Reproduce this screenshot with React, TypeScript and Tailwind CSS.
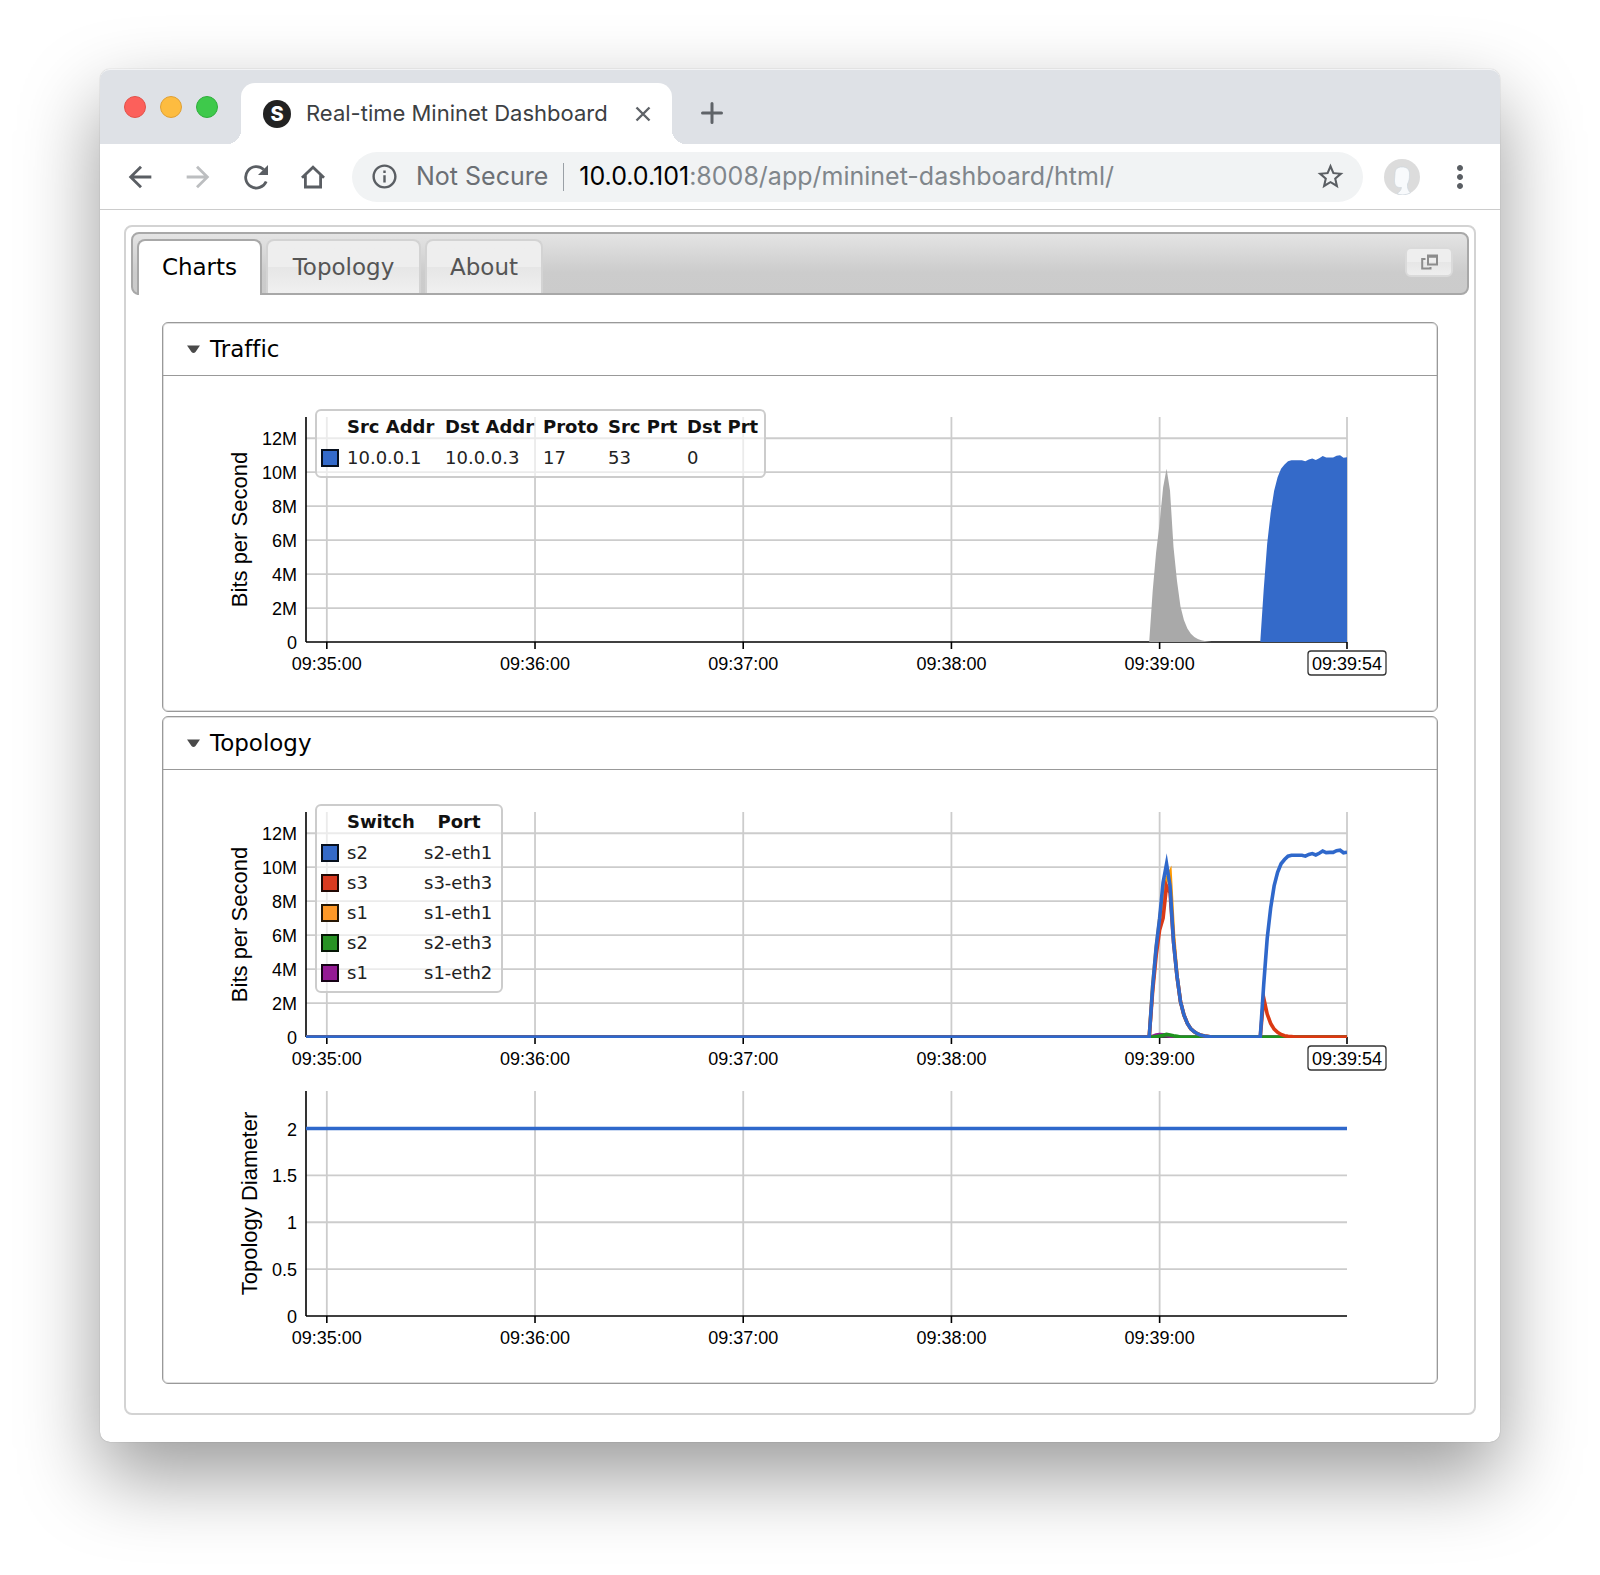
/**
 * Real-time Mininet Dashboard, shown inside a browser window
 */

import React, { useState } from 'react';
import {
  MdArrowBack,
  MdArrowForward,
  MdInfoOutline,
  MdMoreVert,
  MdRefresh,
  MdStarBorder
} from 'react-icons/md';

type Point = [number, number];

interface Series {
  color: string;
  points: Point[];
  area?: boolean;
}

interface Tick {
  value: number;
  label: string;
}

interface ChartProps {
  title: string;
  titleX: number;
  ticks: Tick[];
  max: number;
  series: Series[];
  padTop: number;
  padBottom: number;
  showNow?: boolean;
}

// Plot area inside the chart drawing
const WIDTH = 1274;
const LEFT = 143;
const RIGHT = 1184;
const HEIGHT = 225;

// Times are seconds relative to 09:39:00
const START = -246;
const END = 54;

const timeTicks: Tick[] = [
  { value: -240, label: '09:35:00' },
  { value: -180, label: '09:36:00' },
  { value: -120, label: '09:37:00' },
  { value: -60, label: '09:38:00' },
  { value: 0, label: '09:39:00' }
];

const bpsTicks: Tick[] = [0, 2, 4, 6, 8, 10, 12].map(value => ({
  value,
  label: value === 0 ? '0' : `${value}M`
}));

const diameterTicks: Tick[] = [0, 0.5, 1, 1.5, 2].map(value => ({
  value,
  label: `${value}`
}));

// One sample a second, starting at the given time
const samples = (from: number, values: number[]): Point[] =>
  values.map((value, i) => [from + i, value]);

const decay = [5.6, 3.6, 2.1, 1.3, 0.8, 0.48, 0.3, 0.18, 0.1, 0.06, 0.03, 0];

const ramp = [
  3.1, 5.8, 7.6, 8.9, 9.7, 10.2, 10.45, 10.65, 10.7, 10.7, 10.7, 10.7, 10.65, 10.75, 10.8, 10.72,
  10.82, 10.95, 10.86, 10.87, 10.87, 10.97, 11, 10.85, 10.88
];

const trafficSeries: Series[] = [
  { color: '#a9a9a9', area: true, points: samples(-3, [0, 3, 5.3, 7, 9.1, 10.2, 8.9, ...decay]) },
  { color: '#346ac9', area: true, points: [[29, 0], ...samples(30, ramp)] }
];

const portSeries: Series[] = [
  {
    color: '#941a94',
    points: [[START, 0], ...samples(-3, [0, 0.04, 0.12, 0.14, 0.13, 0.1, 0.05, 0]), [END, 0]]
  },
  {
    color: '#ff9900',
    points: [[START, 0], ...samples(-3, [0, 3, 5.2, 6.9, 8.4, 9.3, 9.7, 6, ...decay.slice(1)])]
  },
  {
    color: '#1f931f',
    points: [[START, 0], ...samples(-3, [0, 0, 0.02, 0.06, 0.1, 0.15, 0.12, 0.07, 0.04, 0]), [END, 0]]
  },
  {
    color: '#db3a17',
    points: [
      [START, 0],
      ...samples(-3, [0, 2.7, 4.8, 6.3, 7, 8.9, 8.5, ...decay])
    ]
  },
  {
    color: '#db3912',
    points: [
      [29, 0],
      ...samples(30, [2.3, 1.35, 0.8, 0.46, 0.27, 0.15, 0.08, 0.04, 0.02, 0]),
      [END, 0]
    ]
  },
  {
    color: '#2f68cb',
    points: [
      [START, 0],
      ...samples(-3, [0, 3, 5.3, 7, 9.1, 10.2, 8.9, ...decay]),
      [29, 0],
      ...samples(30, ramp)
    ]
  }
];

const diameterSeries: Series[] = [{ color: '#2f68cb', points: [[START, 2], [END, 2]] }];

const Chart: React.FC<ChartProps> = ({
  title,
  titleX,
  ticks,
  max,
  series,
  padTop,
  padBottom,
  showNow = false
}) => {
  const x = (t: number) => LEFT + ((t - START) / (END - START)) * (RIGHT - LEFT);
  const y = (v: number) => HEIGHT - (v / max) * HEIGHT;
  const toPoints = (points: Point[]) => points.map(([t, v]) => `${x(t)},${y(v)}`).join(' ');

  const clipId = `plot-${title.replace(/ /g, '-')}-${padBottom}`;

  return (
    <svg
      viewBox={`0 ${-padTop} ${WIDTH} ${padTop + HEIGHT + padBottom}`}
      className="block w-full font-['Liberation_Sans',Arial,sans-serif]"
      role="img"
      aria-label={title}
    >
      <clipPath id={clipId}>
        <rect x={LEFT} y="0" width={RIGHT - LEFT} height={HEIGHT + 1} />
      </clipPath>

      {/* Grid */}
      <g stroke="#cccccc" strokeWidth="1.8">
        {ticks.slice(1).map(tick => (
          <line key={tick.label} x1={LEFT} x2={RIGHT} y1={y(tick.value)} y2={y(tick.value)} />
        ))}
        {timeTicks.map(tick => (
          <line key={tick.label} x1={x(tick.value)} x2={x(tick.value)} y1="0" y2={HEIGHT} />
        ))}
        {showNow && <line x1={RIGHT} x2={RIGHT} y1="0" y2={HEIGHT} />}
      </g>

      {/* Axes */}
      <g stroke="#000000" strokeWidth="1.6">
        <line x1={LEFT} x2={LEFT} y1="0" y2={HEIGHT} />
        <line x1={LEFT} x2={RIGHT} y1={HEIGHT} y2={HEIGHT} />
        {timeTicks.map(tick => (
          <line key={tick.label} x1={x(tick.value)} x2={x(tick.value)} y1={HEIGHT} y2={HEIGHT + 7} />
        ))}
        {showNow && <line x1={RIGHT} x2={RIGHT} y1={HEIGHT} y2={HEIGHT + 7} />}
      </g>

      {/* Data */}
      <g clipPath={`url(#${clipId})`}>
        {series.map(({ color, points, area }) =>
          area ? (
            <polygon
              key={color}
              fill={color}
              points={toPoints([...points, [points[points.length - 1][0], 0]])}
            />
          ) : (
            <polyline
              key={color}
              fill="none"
              stroke={color}
              strokeWidth="3.6"
              strokeMiterlimit="10"
              points={toPoints(points)}
            />
          )
        )}
      </g>

      {/* Labels */}
      <g fontSize="18" textAnchor="end">
        {ticks.map(tick => (
          <text key={tick.label} x={LEFT - 9} y={y(tick.value) + 7}>
            {tick.label}
          </text>
        ))}
      </g>
      <g fontSize="18" textAnchor="middle">
        {timeTicks.map(tick => (
          <text key={tick.label} x={x(tick.value)} y={HEIGHT + 28}>
            {tick.label}
          </text>
        ))}
        {showNow && (
          <>
            <rect
              x={RIGHT - 39}
              y={HEIGHT + 9}
              width="78"
              height="24"
              rx="3"
              fill="#ffffff"
              stroke="#333333"
              strokeWidth="1.3"
            />
            <text x={RIGHT} y={HEIGHT + 28}>
              09:39:54
            </text>
          </>
        )}
      </g>
      <text
        fontSize="22"
        textAnchor="middle"
        transform={`translate(${titleX} ${HEIGHT / 2}) rotate(-90)`}
      >
        {title}
      </text>
    </svg>
  );
};

const Swatch: React.FC<{ className: string }> = ({ className }) => (
  <td className="w-[30px] pl-1">
    <div className={`size-[18px] border-2 border-black/85 ${className}`} />
  </td>
);

const TrafficLegend: React.FC = () => (
  <table className="absolute top-[33px] left-[152px] table-fixed border-separate border-spacing-0 rounded-md border-2 border-[#cccccc] bg-white/60 pb-[3px] text-lg/[30px] text-[#222222]">
    <thead className="text-left text-[#111111]">
      <tr className="h-8 whitespace-nowrap">
        <td className="w-[30px]" />
        <th className="w-[98px]">Src Addr</th>
        <th className="w-[98px]">Dst Addr</th>
        <th className="w-[65px]">Proto</th>
        <th className="w-[79px]">Src Prt</th>
        <th className="w-[77px]">Dst Prt</th>
      </tr>
    </thead>
    <tbody>
      <tr className="h-[30px]">
        <Swatch className="bg-[#346ac9]" />
        <td>10.0.0.1</td>
        <td>10.0.0.3</td>
        <td>17</td>
        <td>53</td>
        <td>0</td>
      </tr>
    </tbody>
  </table>
);

const ports = [
  { color: 'bg-[#346ac9]', name: 's2', port: 's2-eth1' },
  { color: 'bg-[#d93a20]', name: 's3', port: 's3-eth3' },
  { color: 'bg-[#fd9827]', name: 's1', port: 's1-eth1' },
  { color: 'bg-[#279224]', name: 's2', port: 's2-eth3' },
  { color: 'bg-[#941a94]', name: 's1', port: 's1-eth2' }
];

const PortLegend: React.FC = () => (
  <table className="absolute top-[34px] left-[152px] table-fixed border-separate border-spacing-0 rounded-md border-2 border-[#cccccc] bg-white/60 pb-[3px] text-lg/[30px] text-[#222222]">
    <thead className="text-[#111111]">
      <tr className="h-8">
        <td className="w-[30px]" />
        <th className="w-[77px] text-left">Switch</th>
        <th className="w-[77px] pr-[7px] text-center">Port</th>
      </tr>
    </thead>
    <tbody>
      {ports.map(({ color, name, port }) => (
        <tr key={port} className="h-[30px]">
          <Swatch className={color} />
          <td>{name}</td>
          <td>{port}</td>
        </tr>
      ))}
    </tbody>
  </table>
);

const Panel: React.FC<{ title: string; children: React.ReactNode }> = ({ title, children }) => {
  const [isOpen, setIsOpen] = useState(true);

  return (
    <section className="rounded-md border border-[#999999] shadow-[inset_0_0_0_1px_#dddddd]">
      <button
        type="button"
        onClick={() => setIsOpen(!isOpen)}
        aria-expanded={isOpen}
        className="flex h-[53px] w-full items-center gap-[10px] border-b border-[#999999] pl-6 text-left text-[23px]/7"
      >
        <svg viewBox="0 0 13 8" className="h-2 w-[13px]" aria-hidden="true">
          <path d="M0 0.5h13L8.500 7Q6.500 9 4.500 7Z" fill="#4a4a4a" />
        </svg>
        {title}
      </button>
      {isOpen && children}
    </section>
  );
};

const BrowserTabs: React.FC = () => (
  <div className="flex h-[75px] items-end rounded-t-[10px] border-t border-white/60 bg-[#dee1e6] pl-6">
    <div className="flex gap-[14px] self-start pt-[26px]">
      <button type="button" aria-label="Close window" className="size-[22px] rounded-full border border-[#e2524a] bg-[#fc605b]" />
      <button type="button" aria-label="Minimize window" className="size-[22px] rounded-full border border-[#e0a034] bg-[#fdbc40]" />
      <button type="button" aria-label="Zoom window" className="size-[22px] rounded-full border border-[#2fae3c] bg-[#3ec94b]" />
    </div>
    <div className="relative ml-[23px] flex h-[61px] w-[431px] items-center rounded-t-[14px] bg-white pl-[22px] font-[Inter,sans-serif]">
      <span className="absolute bottom-0 -left-[14px] size-[14px] bg-[radial-gradient(circle_at_0_0,transparent_14px,#ffffff_14px)]" />
      <span className="absolute -right-[14px] bottom-0 size-[14px] bg-[radial-gradient(circle_at_100%_0,transparent_14px,#ffffff_14px)]" />
      <span className="flex size-7 items-center justify-center rounded-full bg-[#222222] text-xl font-extrabold text-white">
        S
      </span>
      <span className="ml-[15px] text-[22px] whitespace-nowrap text-[#3c4043]">Real-time Mininet Dashboard</span>
      <button type="button" aria-label="Close tab" className="mr-[21px] ml-auto">
        <svg viewBox="0 0 16 16" className="size-4" stroke="#5f6368" strokeWidth="2.400">
          <path d="M1.500 1.500l13 13M14.500 1.500l-13 13" />
        </svg>
      </button>
    </div>
    <button type="button" aria-label="New tab" className="mb-5 ml-[29px]">
      <svg viewBox="0 0 22 22" className="size-[22px]" stroke="#5f6368" strokeWidth="3" strokeLinecap="round">
        <path d="M11 1.500v19M1.500 11h19" />
      </svg>
    </button>
  </div>
);

const Toolbar: React.FC = () => (
  <div className="flex h-[66px] items-center border-b border-[#cccccc] bg-white pl-[23px] font-[Inter,sans-serif] text-[#5a5e63]">
    <button type="button" aria-label="Back">
      <MdArrowBack className="size-[34px]" />
    </button>
    <button type="button" aria-label="Forward" className="ml-6 text-[#bcbec0]">
      <MdArrowForward className="size-[34px]" />
    </button>
    <button type="button" aria-label="Reload" className="ml-[23px]">
      <svg viewBox="0 0 36 36" className="size-9" fill="none" stroke="currentColor" strokeWidth="2.800">
        <path d="M28.200 22.500A10.700 10.700 0 1 1 25.800 10.600" />
        <path d="M30 6V16H20Z" fill="currentColor" stroke="none" />
      </svg>
    </button>
    <button type="button" aria-label="Home" className="ml-[27px]">
      <svg viewBox="0 0 24 24" className="size-6" fill="none" stroke="currentColor" strokeWidth="2.800">
        <path d="M1 12.800L12 2.200L23 12.800M4.400 10V22H19.600V10" />
      </svg>
    </button>
    <div className="ml-[27px] flex h-[50px] min-w-0 flex-1 items-center rounded-full bg-[#f1f3f4] pr-[17px] pl-[18px] text-[25px] whitespace-nowrap">
      <MdInfoOutline className="size-[29px] shrink-0" />
      <span className="ml-[17px] text-[#6b6f74]">Not Secure</span>
      <span className="mx-[15px] h-7 w-px bg-[#9aa0a6]" />
      <span role="textbox" aria-label="Address" className="text-[#80868b]">
        <span className="text-black">10.0.0.101</span>:8008/app/mininet-dashboard/html/
      </span>
      <button type="button" aria-label="Bookmark this page" className="ml-auto">
        <MdStarBorder className="size-[31px]" />
      </button>
    </div>
    <button type="button" aria-label="Profile" className="ml-[21px]">
      <svg viewBox="0 0 36 36" className="size-9">
        <circle cx="18" cy="18" r="18" fill="#dcdcdc" />
        <path
          d="M11 15C11 10 13.500 8 18 8C23 8 25.500 10.500 25.500 15C25.500 20 25 22 23.500 25C23 29 24.500 32 26.500 34Q18 37.500 13 34.500C15.500 33 17 31.500 17.500 28.500C12 29 10.500 26 10.500 21Z"
          fill="#f8fafc"
          stroke="#c9d3dc"
          strokeWidth="0.6"
        />
      </svg>
    </button>
    <button type="button" aria-label="Menu" className="mr-[22px] ml-[22px]">
      <MdMoreVert className="size-9" />
    </button>
  </div>
);

const tabs = [
  { name: 'Charts', width: 'w-[125px]' },
  { name: 'Topology', width: 'w-[155px]' },
  { name: 'About', width: 'w-[118px]' }
];

const App: React.FC = () => {
  const [activeTab, setActiveTab] = useState('Charts');

  return (
    <div className="overflow-hidden bg-white px-[100px] pt-[69px] pb-[133px] font-['DejaVu_Sans',Verdana,sans-serif] text-black [font-variant-ligatures:none]">
      <div className="rounded-[10px] bg-white pb-[27px] shadow-[0_34px_80px_rgba(0,0,0,0.4),0_0_1px_rgba(0,0,0,0.4)]">
        <BrowserTabs />
        <Toolbar />

        <main className="mx-6 mt-[15px] rounded-lg border-2 border-[#d3d3d3] p-[5px]">
          {/* Page tabs */}
          <nav className="flex h-[63px] gap-1 rounded-lg border-2 border-[#a8a8a8] bg-linear-to-b from-[#e4e4e4] via-[#cccccc] via-65% to-[#cbcbcb] pt-[5px] pl-1">
            {tabs.map(({ name, width }) => (
              <button
                key={name}
                type="button"
                onClick={() => setActiveTab(name)}
                className={`rounded-t-lg border-2 border-b-0 text-[23px]/7 ${width} ${
                  name === activeTab
                    ? '-mb-0.5 border-[#a8a8a8] bg-white pb-0.5 text-black'
                    : 'border-[#d3d3d3] bg-linear-to-b from-[#eeeeee] from-50% via-[#e6e6e6] via-50% to-[#f0f0f0] text-[#555555]'
                }`}
              >
                {name}
              </button>
            ))}
            <button
              type="button"
              aria-label="Open in new window"
              className="mt-2 mr-[14px] ml-auto flex h-[30px] w-12 items-center justify-center rounded-md border-2 border-[#dadada] bg-linear-to-b from-[#eeeeee] from-50% via-[#e6e6e6] via-50% to-[#eeeeee]"
            >
              <svg viewBox="0 0 17 16" className="h-4 w-[17px]" fill="none" stroke="#8c8c8c" strokeWidth="2">
                <path d="M7 1.500H16V10.500H7ZM7 2.800H16M4.500 5H1.200V14.500H9.500V13" />
              </svg>
            </button>
          </nav>

          <div className="flex flex-col gap-1 px-[31px] pt-[27px] pb-6">
            <Panel title="Traffic">
              <div className="relative">
                <Chart
                  title="Bits per Second"
                  titleX={84}
                  ticks={bpsTicks}
                  max={13.25}
                  series={trafficSeries}
                  padTop={41}
                  padBottom={69}
                  showNow
                />
                <TrafficLegend />
              </div>
            </Panel>

            <Panel title="Topology">
              <div className="relative pt-px">
                <Chart
                  title="Bits per Second"
                  titleX={84}
                  ticks={bpsTicks}
                  max={13.25}
                  series={portSeries}
                  padTop={41}
                  padBottom={40}
                  showNow
                />
                <PortLegend />
              </div>
              <Chart
                title="Topology Diameter"
                titleX={94}
                ticks={diameterTicks}
                max={2.4}
                series={diameterSeries}
                padTop={14}
                padBottom={67}
              />
            </Panel>
          </div>
        </main>
      </div>
    </div>
  );
};

export default App;
